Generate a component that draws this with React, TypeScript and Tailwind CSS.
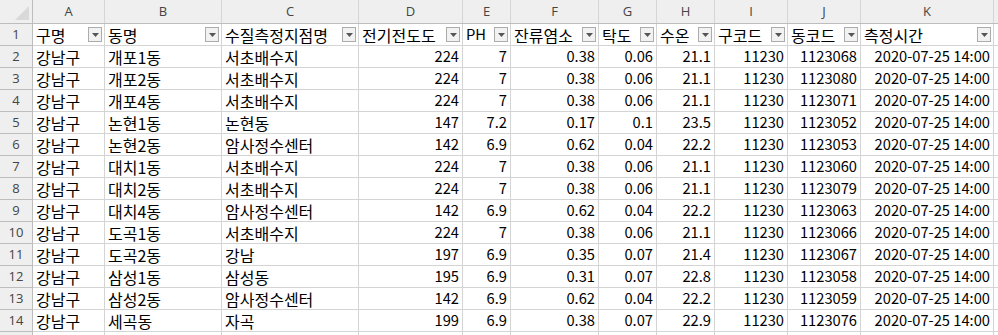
import React from "react";

const cols = ["A", "B", "C", "D", "E", "F", "G", "H", "I", "J", "K"];
const headers = ["구명", "동명", "수질측정지점명", "전기전도도", "PH", "잔류염소", "탁도", "수온", "구코드", "동코드", "측정시간"];
const rows: string[][] = [
  ["강남구", "개포1동", "서초배수지", "224", "7", "0.38", "0.06", "21.1", "11230", "1123068"],
  ["강남구", "개포2동", "서초배수지", "224", "7", "0.38", "0.06", "21.1", "11230", "1123080"],
  ["강남구", "개포4동", "서초배수지", "224", "7", "0.38", "0.06", "21.1", "11230", "1123071"],
  ["강남구", "논현1동", "논현동", "147", "7.2", "0.17", "0.1", "23.5", "11230", "1123052"],
  ["강남구", "논현2동", "암사정수센터", "142", "6.9", "0.62", "0.04", "22.2", "11230", "1123053"],
  ["강남구", "대치1동", "서초배수지", "224", "7", "0.38", "0.06", "21.1", "11230", "1123060"],
  ["강남구", "대치2동", "서초배수지", "224", "7", "0.38", "0.06", "21.1", "11230", "1123079"],
  ["강남구", "대치4동", "암사정수센터", "142", "6.9", "0.62", "0.04", "22.2", "11230", "1123063"],
  ["강남구", "도곡1동", "서초배수지", "224", "7", "0.38", "0.06", "21.1", "11230", "1123066"],
  ["강남구", "도곡2동", "강남", "197", "6.9", "0.35", "0.07", "21.4", "11230", "1123067"],
  ["강남구", "삼성1동", "삼성동", "195", "6.9", "0.31", "0.07", "22.8", "11230", "1123058"],
  ["강남구", "삼성2동", "암사정수센터", "142", "6.9", "0.62", "0.04", "22.2", "11230", "1123059"],
  ["강남구", "세곡동", "자곡", "199", "6.9", "0.38", "0.07", "22.9", "11230", "1123076"],
];

const font = { fontFamily: "'Noto Sans CJK KR', 'Noto Sans', sans-serif" };

function FilterBtn() {
  return (
    <div className="w-[14px] h-[15px] border border-[#acacac] bg-[#f2f2f2] flex items-center justify-center shrink-0">
      <svg width="7" height="4" viewBox="0 0 7 4">
        <polygon points="0,0 7,0 3.5,4" fill="#555" />
      </svg>
    </div>
  );
}

export default function App() {
  const grid =
    "grid grid-cols-[33px_72px_117px_137px_104px_48px_88px_58px_58px_73px_73px_133px_1fr]";
  return (
    <div className="w-[998px] h-[335px] overflow-hidden bg-white text-black" style={font}>
      {/* column header */}
      <div className={`${grid} h-[24px] bg-[#efefef] border-b border-[#bdbdbd]`}>
        <div className="relative border-r border-[#bdbdbd]">
          <svg className="absolute right-[3px] bottom-[3px]" width="14" height="14" viewBox="0 0 14 14">
            <polygon points="14,0 14,14 0,14" fill="#d9d9d9" />
          </svg>
        </div>
        {cols.map((c) => (
          <div
            key={c}
            className="flex items-center justify-center border-r border-[#d6d6d6] text-[13px] text-[#444] font-['Open_Sans',sans-serif]"
          >
            {c}
          </div>
        ))}
        <div />
      </div>
      {/* header row 1 */}
      <div className={`${grid} h-[22px]`}>
        <div className="flex items-center justify-center bg-[#efefef] border-r border-b border-[#bdbdbd] text-[13px] text-[#444] font-['Open_Sans',sans-serif]">
          1
        </div>
        {headers.map((h) => (
          <div
            key={h}
            className="flex items-center justify-between pl-[3px] pr-[2px] border-r border-b border-[#d4d4d4] text-[16px] leading-none overflow-hidden whitespace-nowrap"
          >
            <span className={h === "PH" ? "text-[14.7px]" : ""}>{h}</span>
            <FilterBtn />
          </div>
        ))}
        <div className="border-b border-[#d4d4d4]" />
      </div>
      {rows.map((r, i) => (
        <div key={i} className={`${grid} h-[22px]`}>
          <div className="flex items-center justify-center bg-[#efefef] border-r border-b border-[#bdbdbd] text-[13px] text-[#444] font-['Open_Sans',sans-serif]">
            {i + 2}
          </div>
          {r.map((v, j) => (
            <div
              key={j}
              className={`flex items-center px-[3px] border-r border-b border-[#d4d4d4] leading-none whitespace-nowrap overflow-hidden ${
                j < 3 ? "justify-start text-[16px]" : "justify-end text-[14.7px]"
              }`}
            >
              {v}
            </div>
          ))}
          <div className="flex items-center justify-end px-[3px] border-r border-b border-[#d4d4d4] text-[14.7px] leading-none whitespace-nowrap overflow-hidden">
            2020-07-25 14:00
          </div>
          <div className="border-b border-[#d4d4d4]" />
        </div>
      ))}
      <div className={`${grid} h-[22px]`}>
        <div className="bg-[#efefef] border-r border-[#bdbdbd]" />
        {cols.map((c) => (
          <div key={c} className="border-r border-[#d4d4d4]" />
        ))}
        <div />
      </div>
    </div>
  );
}
